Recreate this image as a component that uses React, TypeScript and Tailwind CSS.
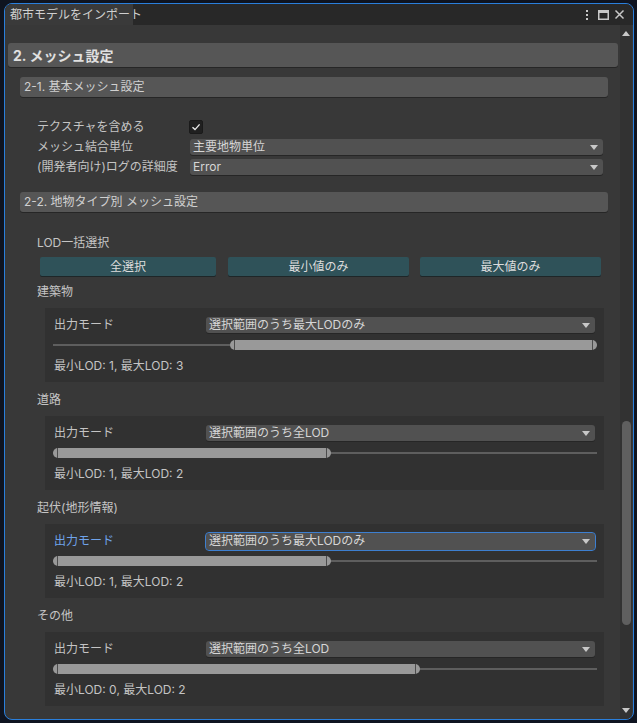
import React from "react";

function Arrow({ className = "" }: { className?: string }) {
  return (
    <svg width="8" height="5" viewBox="0 0 8 5" className={className}>
      <polygon points="0,0 8,0 4,5" fill="#c8c8c8" />
    </svg>
  );
}

function Dropdown({ value, focused = false, w }: { value: string; focused?: boolean; w: string }) {
  return (
    <div
      className={
        "h-[16px] rounded-[3px] bg-[#515151] shadow-[0_1px_0_#262626] flex items-center justify-between pl-[3px] pr-[5px] text-[12px] text-[#d6d6d6] leading-none " +
        w +
        (focused ? " outline outline-1 outline-[#3d7fd0] h-[17px]" : "")
      }
    >
      <span className="whitespace-nowrap">{value}</span>
      <Arrow />
    </div>
  );
}

function RangeSlider({ start, end }: { start: number; end: number }) {
  return (
    <div className="relative h-[10px] ml-[8px] mr-[7px]">
      <div className="absolute left-0 right-0 top-[4px] h-[2px] bg-[#5e5e5e]" />
      <div
        className="absolute top-0 h-[10px] rounded-[5px] bg-[#999999]"
        style={{
          left: `calc(${start} * (100% - 12px))`,
          width: `calc(${end - start} * (100% - 12px) + 12px)`,
        }}
      >
        <div className="absolute left-[4px] top-0 h-[10px] w-[1px] bg-[#4c4c4c]" />
        <div className="absolute right-[4px] top-0 h-[10px] w-[1px] bg-[#4c4c4c]" />
      </div>
    </div>
  );
}

type Item = {
  title: string;
  mode: string;
  start: number;
  end: number;
  label: string;
  focused?: boolean;
};

const items: Item[] = [
  { title: "建築物", mode: "選択範囲のうち最大LODのみ", start: 1 / 3, end: 1, label: "最小LOD: 1, 最大LOD: 3" },
  { title: "道路", mode: "選択範囲のうち全LOD", start: 0, end: 0.5, label: "最小LOD: 1, 最大LOD: 2" },
  { title: "起伏(地形情報)", mode: "選択範囲のうち最大LODのみ", start: 0, end: 0.5, label: "最小LOD: 1, 最大LOD: 2", focused: true },
  { title: "その他", mode: "選択範囲のうち全LOD", start: 0, end: 2 / 3, label: "最小LOD: 0, 最大LOD: 2" },
];

function Panel({ item }: { item: Item }) {
  return (
    <div>
      <div className="mt-[9px] ml-[32px] h-[18px] flex items-center text-[12px] text-[#c4c4c4]">{item.title}</div>
      <div className="mt-[7px] ml-[40px] w-[559px] h-[74px] bg-[#313131] pt-[9px]">
        <div className="h-[16px] flex items-center">
          <div
            className={
              "w-[161px] pl-[9px] text-[12px] " + (item.focused ? "text-[#6fa3ea]" : "text-[#c4c4c4]")
            }
          >
            出力モード
          </div>
          <Dropdown value={item.mode} focused={item.focused} w="w-[389px]" />
        </div>
        <div className="mt-[7px]">
          <RangeSlider start={item.start} end={item.end} />
        </div>
        <div className="mt-[8px] h-[16px] pl-[9px] flex items-center text-[12px] text-[#c4c4c4]">{item.label}</div>
      </div>
    </div>
  );
}

export default function App() {
  return (
    <div className="w-[637px] h-[723px] bg-[#0f1420] pl-[4px] pt-[3px] font-[family-name:Inter,'Noto_Sans_CJK_JP',sans-serif]">
      <div className="w-[630px] h-[717px] border border-[#2a7fdc] rounded-[8px] overflow-hidden flex flex-col bg-[#383838]">
        {/* tab bar */}
        <div className="h-[21px] bg-[#282828] flex items-stretch shrink-0">
          <div className="w-[128px] bg-[#3a3a3a] pl-[5px] flex items-center text-[12px] text-[#cfcfcf] whitespace-nowrap">
            都市モデルをインポート
          </div>
          <div className="flex-1" />
          <div className="flex items-center pr-[4px]">
            <svg width="44" height="21" viewBox="0 0 44 21">
              <rect x="1" y="6" width="2" height="2" fill="#c8c8c8" />
              <rect x="1" y="10" width="2" height="2" fill="#c8c8c8" />
              <rect x="1" y="14" width="2" height="2" fill="#c8c8c8" />
              <rect x="13.75" y="6.75" width="9.5" height="8.5" fill="none" stroke="#c8c8c8" strokeWidth="1.5" />
              <rect x="13" y="6" width="11" height="3" fill="#c8c8c8" />
              <path d="M30.5 6.5 L38.5 14.5 M38.5 6.5 L30.5 14.5" stroke="#c8c8c8" strokeWidth="1.5" />
            </svg>
          </div>
        </div>
        {/* body */}
        <div className="flex flex-1 min-h-0">
          <div className="w-[615px] flex flex-col">
            <div className="mt-[18px] ml-[3px] w-[610px] h-[24px] rounded-[3px] bg-[#565656] shadow-[0_1px_0_#262626] pl-[5px] flex items-center text-[14px] font-bold text-[#e0e0e0]">
              2. メッシュ設定
            </div>
            <div className="mt-[10px] ml-[15px] w-[588px] h-[20px] rounded-[3px] bg-[#565656] shadow-[0_1px_0_#262626] pl-[4px] flex items-center text-[12px] text-[#d0d0d0]">
              2-1. 基本メッシュ設定
            </div>
            <div className="mt-[21px] ml-[32px] flex flex-col gap-[2px]">
              <div className="h-[18px] flex items-center">
                <div className="w-[152px] text-[12px] text-[#c4c4c4]">テクスチャを含める</div>
                <div className="w-[14px] h-[14px] rounded-[2px] bg-[#202020] border border-[#1a1a1a] flex items-center justify-center">
                  <svg width="10" height="10" viewBox="0 0 10 10">
                    <path d="M1.5 5.2 L4 7.6 L8.6 2.4" fill="none" stroke="#e8e8e8" strokeWidth="1.4" />
                  </svg>
                </div>
              </div>
              <div className="h-[18px] flex items-center">
                <div className="w-[153px] text-[12px] text-[#c4c4c4]">メッシュ結合単位</div>
                <Dropdown value="主要地物単位" w="w-[413px]" />
              </div>
              <div className="h-[18px] flex items-center">
                <div className="w-[153px] text-[12px] text-[#c4c4c4] whitespace-nowrap">(開発者向け)ログの詳細度</div>
                <Dropdown value="Error" w="w-[413px]" />
              </div>
            </div>
            <div className="mt-[16px] ml-[15px] w-[588px] h-[20px] rounded-[3px] bg-[#565656] shadow-[0_1px_0_#262626] pl-[4px] flex items-center text-[12px] text-[#d0d0d0]">
              2-2. 地物タイプ別 メッシュ設定
            </div>
            <div className="mt-[22px] ml-[32px] h-[18px] flex items-center text-[12px] text-[#c4c4c4]">LOD一括選択</div>
            <div className="mt-[5px] ml-[35px] flex">
              <div className="w-[176px] h-[19px] rounded-[2px] bg-[#2f5259] shadow-[0_1px_0_#1e2628] flex items-center justify-center text-[12px] text-[#dcdcdc]">
                全選択
              </div>
              <div className="ml-[12px] w-[181px] h-[19px] rounded-[2px] bg-[#2f5259] shadow-[0_1px_0_#1e2628] flex items-center justify-center text-[12px] text-[#dcdcdc]">
                最小値のみ
              </div>
              <div className="ml-[11px] w-[181px] h-[19px] rounded-[2px] bg-[#2f5259] shadow-[0_1px_0_#1e2628] flex items-center justify-center text-[12px] text-[#dcdcdc]">
                最大値のみ
              </div>
            </div>
            <div className="-mt-[2px]">
              {items.map((it) => (
                <Panel key={it.title} item={it} />
              ))}
            </div>
          </div>
          {/* scrollbar */}
          <div className="w-[12px] bg-[#323232] flex flex-col items-center">
            <svg width="8" height="5" viewBox="0 0 8 5" className="mt-[6px]">
              <polygon points="0,5 8,5 4,0" fill="#c8c8c8" />
            </svg>
            <div className="mt-[385px] w-[9px] h-[204px] rounded-[5px] bg-[#5f5f5f] ml-[1px]" />
            <div className="flex-1" />
            <svg width="8" height="5" viewBox="0 0 8 5" className="mb-[6px]">
              <polygon points="0,0 8,0 4,5" fill="#c8c8c8" />
            </svg>
          </div>
        </div>
      </div>
    </div>
  );
}
